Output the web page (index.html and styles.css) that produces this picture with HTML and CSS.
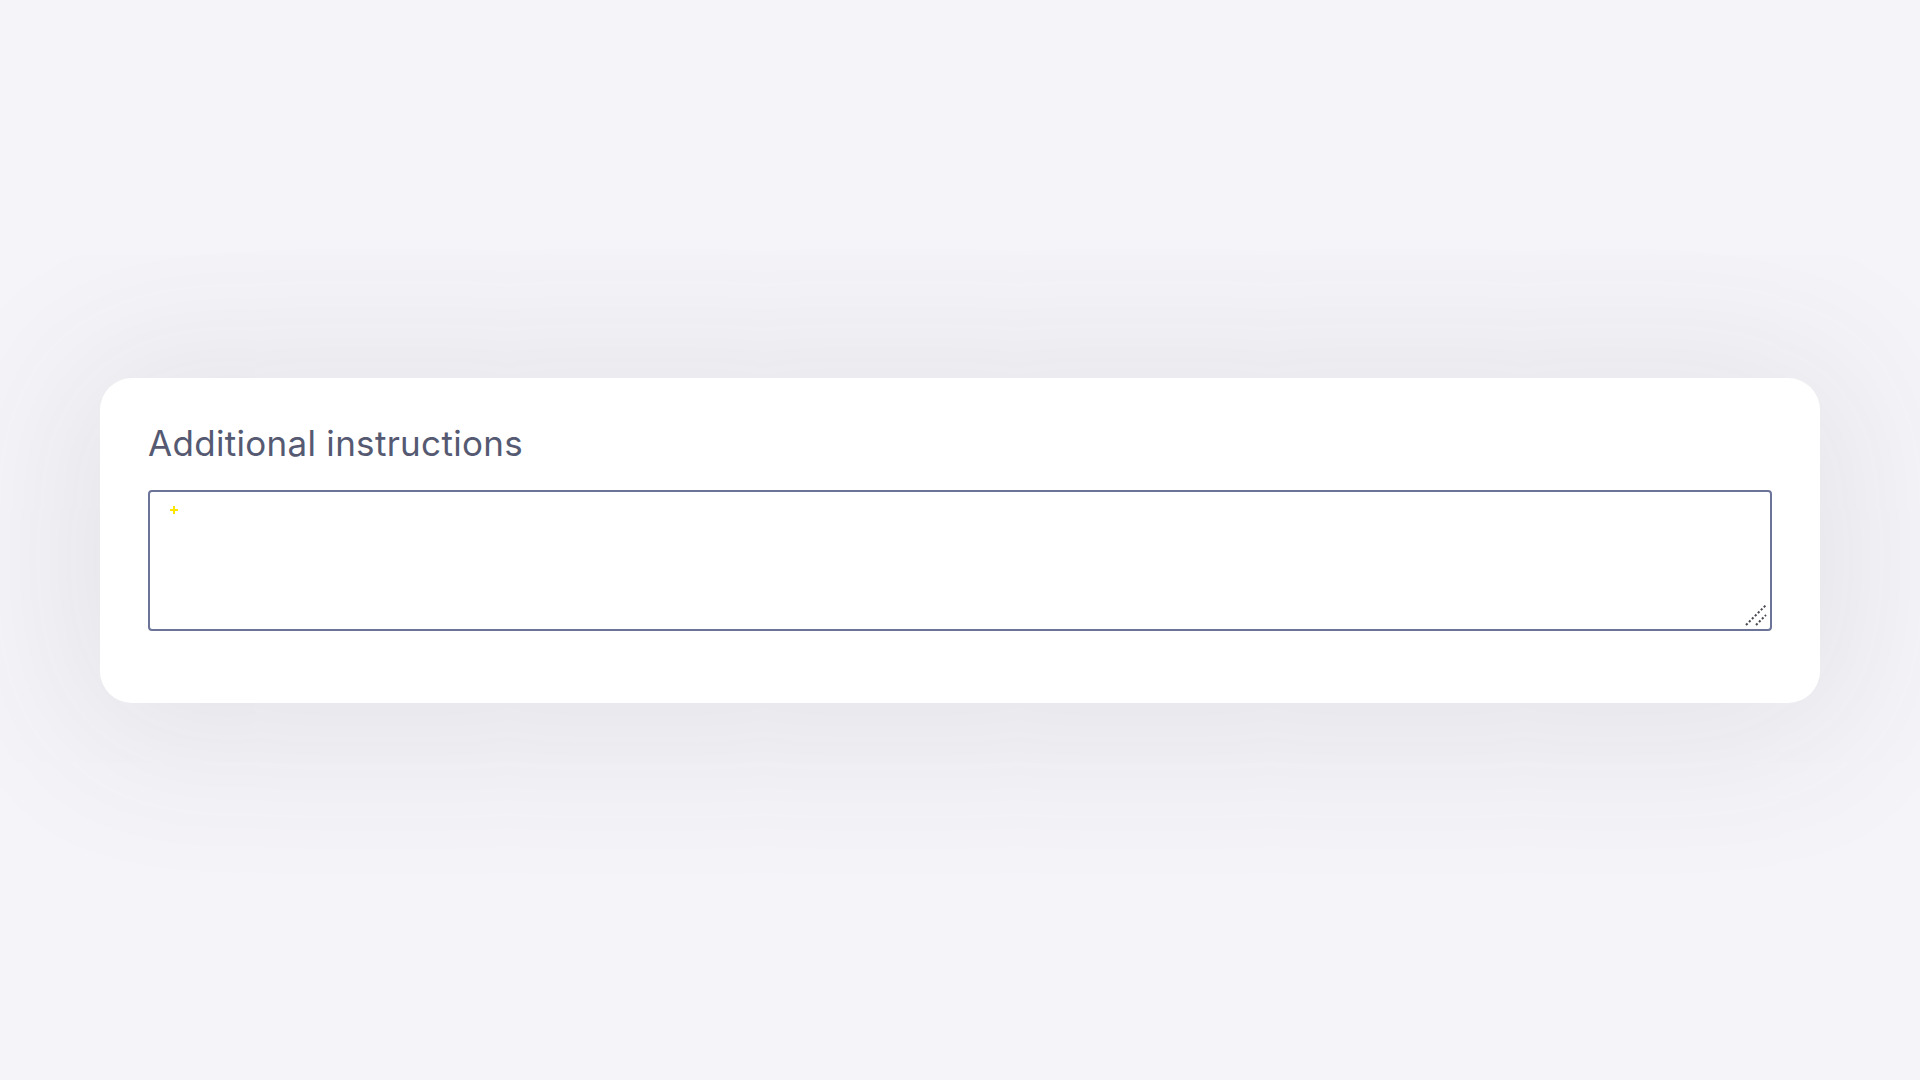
FILE: index.html
```html
<!DOCTYPE html>
<html lang="en">
<head>
    <meta charset="UTF-8">
    <meta name="viewport" content="width=device-width, initial-scale=1.0">
    <title>Additional instructions</title>
    <link rel="stylesheet" href="styles.css">
</head>
<body>
    <div class="page">
        <div class="card">
            <label class="field-label" for="instructions">Additional instructions</label>
            <div class="field-wrap">
                <textarea class="field-input" id="instructions"></textarea>
                <span class="spark"></span>
                <svg class="grip" width="24" height="24" viewBox="0 0 24 24">
                    <line x1="2" y1="22" x2="22" y2="2" stroke="#4a4a52" stroke-width="2" stroke-dasharray="2.2 2"/>
                    <line x1="12" y1="22" x2="22" y2="12" stroke="#4a4a52" stroke-width="2" stroke-dasharray="2.2 2"/>
                </svg>
            </div>
        </div>
    </div>
</body>
</html>
```

FILE: styles.css
```css
* {
    margin: 0;
    padding: 0;
    box-sizing: border-box;
}

html, body {
    height: 100%;
}

body {
    font-family: Inter, 'Liberation Sans', sans-serif;
    background: #f5f5f9;
    color: #555a72;
}

.page {
    height: 100%;
    display: flex;
    align-items: center;
    padding: 0 100px;
}

.card {
    width: 100%;
    height: 325px;
    background: #ffffff;
    border-radius: 32px;
    padding: 43px 48px 72px;
    display: flex;
    flex-direction: column;
    box-shadow: 0 10px 160px 30px rgba(40, 40, 70, 0.09);
}

.field-label {
    display: block;
    font-size: 35px;
    line-height: 44px;
    font-weight: 400;
    letter-spacing: 0.3px;
    color: #555a72;
    margin-bottom: 25px;
}

.field-wrap {
    position: relative;
    flex: 1;
    display: flex;
}

.field-input {
    flex: 1;
    width: 100%;
    border: 2px solid #6b7399;
    border-radius: 4px;
    font-family: inherit;
    font-size: 20px;
    padding: 12px 16px;
    outline: none;
    resize: none;
    background: #ffffff;
}

.spark {
    position: absolute;
    left: 22px;
    top: 16px;
    width: 8px;
    height: 8px;
}

.spark::before,
.spark::after {
    content: '';
    position: absolute;
    background: #ffe600;
}

.spark::before {
    left: 3px;
    top: 0;
    width: 2px;
    height: 8px;
}

.spark::after {
    left: 0;
    top: 3px;
    width: 8px;
    height: 2px;
}

.grip {
    position: absolute;
    right: 4px;
    bottom: 4px;
    pointer-events: none;
}
```
